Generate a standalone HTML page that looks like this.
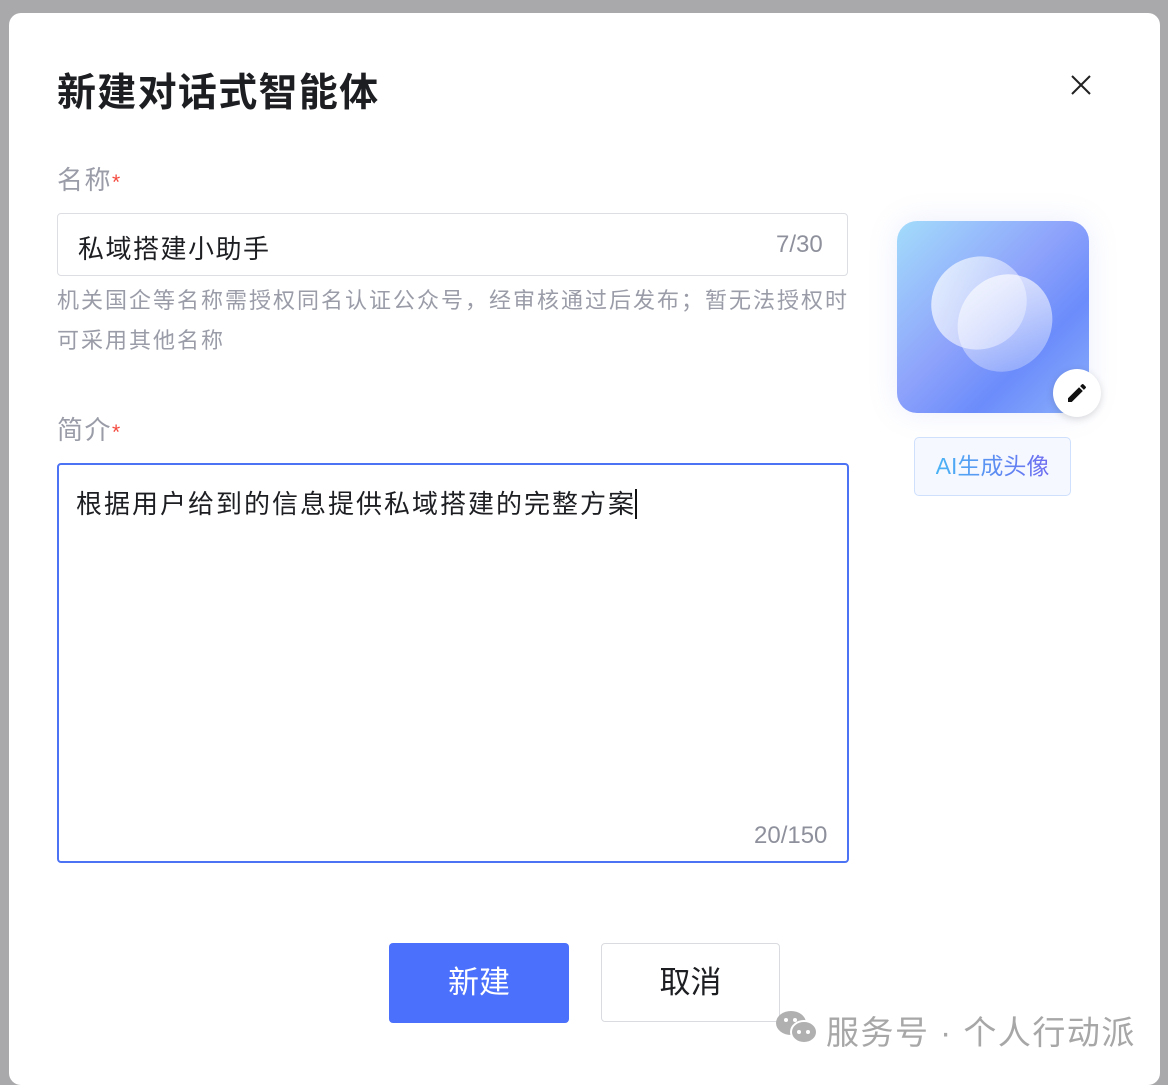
<!DOCTYPE html>
<html><head><meta charset="utf-8"><style>
body{margin:0;width:1168px;height:1074px;background:#a9a9ac;position:relative;overflow:hidden;font-family:"Liberation Sans","Noto Sans CJK SC",sans-serif}
.m{position:absolute;left:9px;top:13px;width:1151px;height:1072px;background:#fff;border-radius:12px}
.a{position:absolute;white-space:nowrap}
.t{left:57px;top:62px;font-size:39px;font-weight:bold;color:#1d1e22;letter-spacing:1.3px}
.lab{font-size:26px;color:#9a9ca8;letter-spacing:1.5px}
.lab i{color:#f5493e;font-style:normal;font-size:21px}
.in{left:57px;top:213px;width:789px;height:61px;border:1.5px solid #dcdee3;border-radius:4px}
.ta{left:57px;top:463px;width:788px;height:396px;border:2px solid #4d73f5;border-radius:4px}
.hint{left:57px;top:281px;font-size:22px;color:#9a9ca8;line-height:40px;letter-spacing:2px}
.av{left:897px;top:221px;width:192px;height:192px;border-radius:20px;overflow:hidden;background:linear-gradient(135deg,#a3dcfb 0%,#8ea3fb 45%,#6b8cfb 70%,#8cb0fb 100%);box-shadow:0 0 30px rgba(120,140,250,.15)}
.btn{top:943px;width:180px;height:80px;border-radius:4px;font-size:31px;text-align:center;line-height:80px}
</style></head><body>
<div class="m"></div>
<div class="a t">新建对话式智能体</div>
<svg class="a" style="left:1070px;top:74px" width="22" height="22"><path d="M2 2L20 20M20 2L2 20" stroke="#222" stroke-width="2"/></svg>
<div class="a lab" style="left:57px;top:160px">名称<i>*</i></div>
<div class="a in"></div>
<div class="a" style="left:78px;top:229px;font-size:26px;color:#1d1e22;letter-spacing:1.5px">私域搭建小助手</div>
<div class="a" style="left:776px;top:231px;font-size:24px;color:#8e909c">7/30</div>
<div class="a hint">机关国企等名称需授权同名认证公众号，经审核通过后发布；暂无法授权时<br>可采用其他名称</div>
<div class="a lab" style="left:57px;top:410px">简介<i>*</i></div>
<div class="a ta"></div>
<div class="a" style="left:76px;top:484px;font-size:26px;color:#1d1e22;letter-spacing:2px">根据用户给到的信息提供私域搭建的完整方案<span style="border-left:2px solid #111;margin-left:-1px"></span></div>
<div class="a" style="left:754px;top:822px;font-size:24px;color:#8e909c">20/150</div>
<div class="a av">
<div class="a" style="left:36px;top:36px;width:92px;height:92px;border-radius:50%;background:linear-gradient(135deg,rgba(255,255,255,.75),rgba(255,255,255,.3));transform:rotate(-30deg) scaleX(1.05)"></div>
<div class="a" style="left:62px;top:52px;width:92px;height:100px;border-radius:50%;background:linear-gradient(135deg,rgba(255,255,255,.75),rgba(255,255,255,.2));transform:rotate(35deg)"></div>
</div>
<div class="a" style="left:1053px;top:369px;width:48px;height:48px;border-radius:50%;background:#fff;box-shadow:0 2px 8px rgba(0,0,0,.15)"></div>
<svg class="a" style="left:1065px;top:381px" width="24" height="24" viewBox="0 0 24 24"><path d="M3 17.25V21h3.75L17.81 9.94l-3.75-3.75L3 17.25zM20.71 7.04a1 1 0 000-1.41l-2.34-2.34a1 1 0 00-1.41 0l-1.83 1.83 3.75 3.75 1.83-1.83z" fill="#111"/></svg>
<div class="a" style="left:914px;top:437px;width:155px;height:57px;border:1.5px solid #cfe0fd;border-radius:5px;background:#f6f8ff;text-align:center;line-height:57px;font-size:23px"><span style="background:linear-gradient(90deg,#49b3f5,#6e6cf0);-webkit-background-clip:text;color:transparent">AI生成头像</span></div>
<div class="a btn" style="left:389px;background:#4b70fb;color:#fff">新建</div>
<div class="a btn" style="left:601px;width:177px;height:77px;border:1.5px solid #d9dbe0;color:#1d1e22;line-height:77px">取消</div>
<svg class="a" style="left:774px;top:1008px" width="46" height="38" viewBox="0 0 46 38"><ellipse cx="17" cy="15" rx="15" ry="12" fill="#b0b0b0"/><ellipse cx="30" cy="24" rx="13" ry="11" fill="#b0b0b0" stroke="#fff" stroke-width="2"/><circle cx="25" cy="24" r="2" fill="#fff"/><circle cx="34" cy="24" r="2" fill="#fff"/><circle cx="12" cy="12" r="2" fill="#fff"/><circle cx="21" cy="12" r="2" fill="#fff"/></svg>
<div class="a" style="left:826px;top:1006px;font-size:33px;color:#a7a7a7;letter-spacing:1.5px">服务号 · 个人行动派</div>
</body></html>
